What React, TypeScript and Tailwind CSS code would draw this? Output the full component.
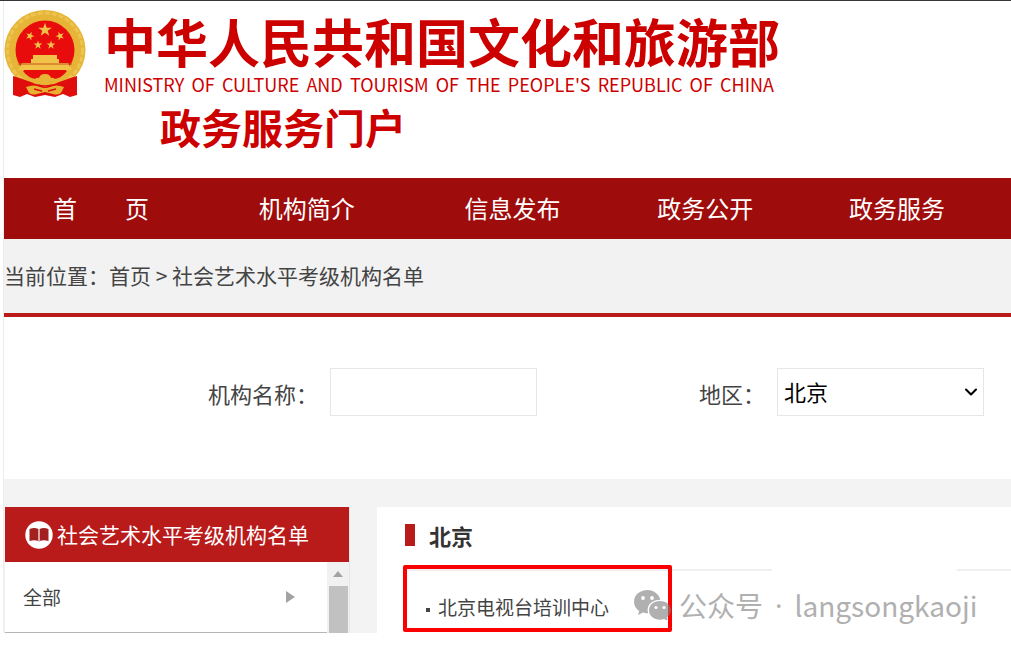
import { useState } from 'react'
import { ChevronDown } from 'lucide-react'

const navItems = ['首\u3000\u3000页', '机构简介', '信息发布', '政务公开', '政务服务']
const regions = ['北京', '天津', '河北', '上海', '江苏', '浙江', '广东']
const subtitle = "MINISTRY OF CULTURE AND TOURISM OF THE PEOPLE'S REPUBLIC OF CHINA"

const STAR = 'M0 -10 L2.3 -3.1 L9.5 -3.1 L3.7 1.2 L5.9 8.1 L0 3.9 L-5.9 8.1 L-3.7 1.2 L-9.5 -3.1 L-2.3 -3.1 Z'

function Emblem() {
  return (
    <svg viewBox="0 0 82 90" className="h-[90px] w-[82px] shrink-0" role="img" aria-label="国徽">
      <ellipse cx="41" cy="40" rx="40.5" ry="40" fill="#e6b437" />
      <ellipse cx="41" cy="40" rx="37.5" ry="37" fill="none" stroke="#edc450" strokeWidth="3" strokeDasharray="5 2" />
      <circle cx="41" cy="40" r="29.5" fill="#e80c0c" />
      <g fill="#f0c248">
        <path d={STAR} transform="translate(41 20) scale(0.72)" />
        <path d={STAR} transform="translate(26 26) rotate(20) scale(0.46)" />
        <path d={STAR} transform="translate(56 26) rotate(-20) scale(0.46)" />
        <path d={STAR} transform="translate(34 35) scale(0.46)" />
        <path d={STAR} transform="translate(47 35) scale(0.46)" />
        <path d="M29 45 H53 V49 H55 V53 H64 L68 60 H14 L18 53 H27 V49 H29 Z" />
      </g>
      <path d="M14 54 H68" stroke="#c9541f" strokeWidth="1" />
      <path d="M19 61 H63 Q58 68 50 69 H32 Q24 68 19 61 Z" fill="#e80c0c" />
      <path
        d="M9 66 Q16 68 24 71 L41 77 L58 71 Q66 68 73 66 L73 85 L66 87 L59 84 L51 87 L41 85 L31 87 L23 84 L16 87 L9 85 Z"
        fill="#e00d0d"
      />
      <path d="M29 73 Q31 67 35 68 Q36 64 41 64 Q46 64 47 68 Q51 67 53 73 Q47 75 41 73 Q35 75 29 73 Z" fill="#e8b435" />
      <path
        d="M22 77 Q30 74 36 77 Q41 79 46 77 Q52 74 60 77 L58 81 Q56 86 49 84 L41 82 L33 84 Q26 86 24 81 Z"
        fill="#e8b030"
      />
      <path d="M30 79 L38 81 M52 79 L44 81 M34 75 Q41 77 48 75" stroke="#e00d0d" strokeWidth="1.5" fill="none" />
    </svg>
  )
}

function BookIcon() {
  return (
    <svg viewBox="0 0 28 28" className="size-7 shrink-0" aria-hidden="true">
      <circle cx="14" cy="14" r="13.7" fill="#fff" />
      <path
        d="M4.5 8 Q9.5 6 13.3 8 V20 Q9.5 18.5 4.5 20 Z M14.7 8 Q18.5 6 23.5 8 V20 Q18.5 18.5 14.7 20 Z"
        fill="#a32020"
      />
      <path d="M14 8 V21" stroke="#d98c8c" strokeWidth="1" />
    </svg>
  )
}

function WechatIcon() {
  return (
    <svg viewBox="0 0 37 30" className="h-[30px] w-[37px] shrink-0" aria-hidden="true">
      <path
        d="M13.5 0 C6 0 0 5 0 11.7 C0 15.5 2 18.8 5.2 21 L4 25 L9 22.6 C10.5 23 12 23.4 14.2 23.2 C11.5 15.5 18 9.8 26.4 9.8 C25 4 19.5 0 13.5 0 Z"
        fill="#b0b0b0"
      />
      <path
        d="M26 11 C19.5 11 15 15.2 15 20.3 C15 25.5 19.5 29.7 26 29.7 C27.5 29.7 28.8 29.4 30 29 L34 31 L33 27.5 C35.5 25.8 37 23.2 37 20.3 C37 15.2 32.5 11 26 11 Z"
        fill="#808080"
        fillOpacity="0.62"
      />
      <g fill="#fff">
        <circle cx="9" cy="8" r="1.9" />
        <circle cx="18" cy="8" r="1.9" />
        <circle cx="22" cy="17.5" r="1.6" />
        <circle cx="30" cy="17.5" r="1.6" />
      </g>
    </svg>
  )
}

function Header() {
  return (
    <header className="flex h-[177px] items-start gap-[18px] pt-[9px]">
      <Emblem />
      <div className="pt-1 text-[#cd0000]">
        <h1 className="text-[52px] leading-[54px] font-bold whitespace-nowrap">中华人民共和国文化和旅游部</h1>
        <p className="flex justify-between pr-1.5 text-[18px] leading-8 whitespace-nowrap">
          {subtitle.split(' ').map((word, i) => (
            <span key={i}>{word}</span>
          ))}
        </p>
        <p className="pt-0.5 pl-14 text-[41px] leading-[48px] font-bold">政务服务门户</p>
      </div>
    </header>
  )
}

function SearchForm() {
  const [name, setName] = useState('')
  const [region, setRegion] = useState('北京')

  return (
    <form className="flex items-start justify-between bg-white pt-[51px] pr-[27px] pb-[63px] pl-[204px] text-[22px] text-[#444]">
      <div className="flex items-center gap-3">
        <label htmlFor="org-name" className="pt-0.5">机构名称：</label>
        <input
          id="org-name"
          type="text"
          value={name}
          onChange={e => setName(e.target.value)}
          className="h-12 w-[207px] border border-[#e6e6e6] bg-white px-2 outline-none"
        />
      </div>
      <div className="flex items-center gap-3">
        <label htmlFor="region" className="pt-0.5">地区：</label>
        <div className="relative">
          <select
            id="region"
            value={region}
            onChange={e => setRegion(e.target.value)}
            className="h-12 w-[207px] appearance-none border border-[#e6e6e6] bg-white px-1.5 pb-0.5 text-black outline-none"
          >
            {regions.map(r => (
              <option key={r}>{r}</option>
            ))}
          </select>
          <ChevronDown className="pointer-events-none absolute top-3.5 right-[3px] size-5 text-black" strokeWidth={2.5} />
        </div>
      </div>
    </form>
  )
}

function Sidebar() {
  return (
    <aside className="w-[346px] shrink-0 border-r border-[#e6e6e6] pl-px">
      <h2 className="flex h-[55px] items-center gap-1 bg-[#b91a1a] pl-5 text-[21px] text-white">
        <BookIcon />
        社会艺术水平考级机构名单
      </h2>
      <div className="flex h-[71px]">
        <a
          href="#all"
          className="flex flex-1 items-center justify-between border-b border-[#b5b5b5] bg-white pr-8 pl-[18px] text-[19px] text-[#444]"
        >
          全部
          <svg viewBox="0 0 9 12" className="h-3 w-[9px]" aria-hidden="true">
            <path d="M0 0 L9 6 L0 12 Z" fill="#a3a3a3" />
          </svg>
        </a>
        <div className="flex w-[22px] flex-col items-center bg-[#f1f1f1]">
          <svg viewBox="0 0 10 6" className="my-[9px] h-[6px] w-[10px] shrink-0" aria-hidden="true">
            <path d="M5 0 L10 6 H0 Z" fill="#a3a3a3" />
          </svg>
          <div className="w-[19px] flex-1 bg-[#c1c1c1]" />
        </div>
      </div>
    </aside>
  )
}

function Results() {
  return (
    <section className="relative flex-1 bg-white">
      <h2 className="flex h-[62px] items-center gap-3.5 pb-1.5 pl-7 text-[22px] font-bold text-[#333]">
        <span className="h-[22px] w-2.5 bg-[#b91a1a]" />
        北京
      </h2>
      <div className="flex justify-between pl-7">
        <span className="h-0.5 w-[367px] bg-[#efefef]" />
        <span className="h-0.5 w-[54px] bg-[#efefef]" />
      </div>
      <ul className="pt-[22px] pl-[49px] text-[19px] leading-7 text-[#444]">
        <li className="flex items-center gap-2">
          <span className="mt-1.5 size-1 bg-[#444]" />
          <a href="#beijing-tv">北京电视台培训中心</a>
        </li>
      </ul>
      {/* highlight frame around the first entry */}
      <div className="absolute top-[58px] left-[26px] h-[67px] w-[269px] rounded-xs border-4 border-[#fa0000]" />
      {/* account watermark */}
      <div className="absolute top-[78px] left-[257px] flex items-center gap-2 text-[28px] leading-10 whitespace-nowrap text-[#b0b0b0]">
        <WechatIcon />
        <span>公众号</span>
        <span className="px-1 font-['Noto_Sans',sans-serif]">·</span>
        <span>langsongkaoji</span>
      </div>
    </section>
  )
}

export default function App() {
  return (
    <div className="overflow-hidden bg-white pb-[13px] pl-[3px] font-['Noto_Sans_CJK_SC',sans-serif]">
      <div className="-ml-[3px] h-px bg-[#3a3638]" />
      <div className="border-l border-[#ececec]">
        <Header />
        <nav className="grid h-[61px] grid-cols-[194fr_218fr_194fr_192fr_192fr] items-center bg-[#9e0c0c] pr-[18px] pb-0.5 text-center text-[24px] text-white">
          {navItems.map(item => (
            <a key={item} href="#nav" className="whitespace-nowrap">
              {item}
            </a>
          ))}
        </nav>
        <div className="border-b-4 border-[#b91a1a] bg-[#f2f2f2] pt-5 pb-[22px] text-[21px] leading-8 text-[#444]">
          当前位置：<a href="#home">首页</a> &gt; <a href="#list">社会艺术水平考级机构名单</a>
        </div>
        <SearchForm />
        <main className="flex gap-[27px] bg-[#f3f3f3] pt-7">
          <Sidebar />
          <Results />
        </main>
      </div>
    </div>
  )
}
